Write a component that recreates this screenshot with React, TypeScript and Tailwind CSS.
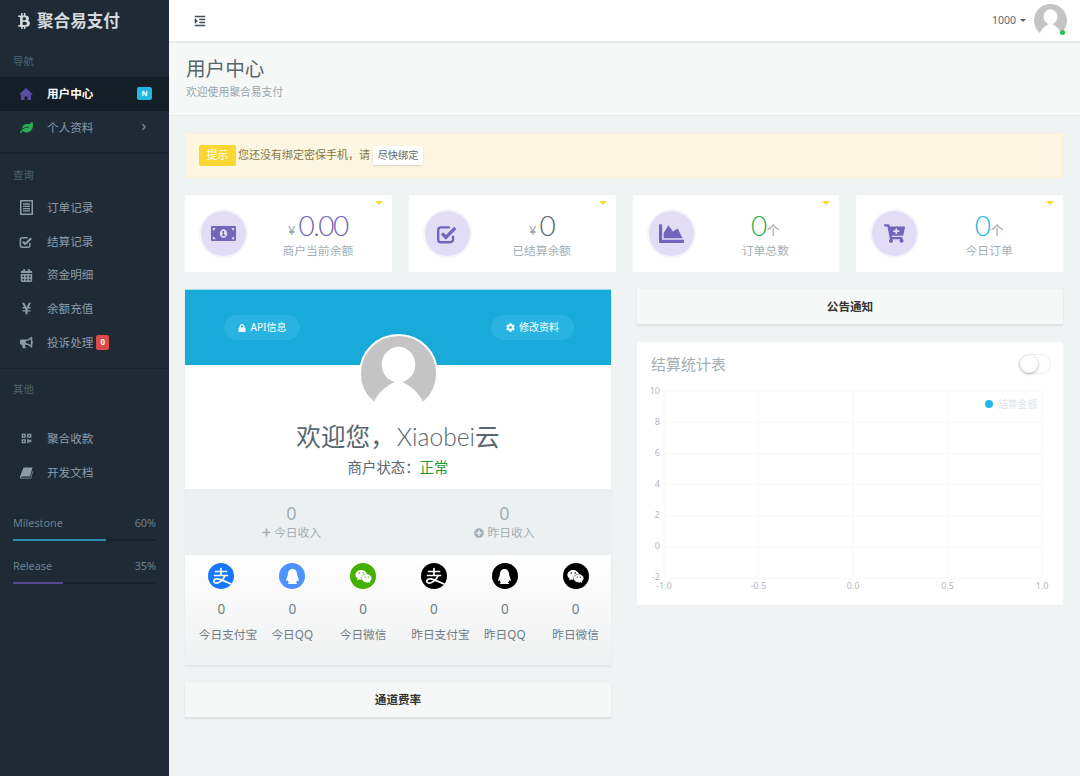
import {
  FaBtc,
  FaLeaf,
  FaCalendarAlt,
  FaYenSign,
  FaBullhorn,
  FaQrcode,
  FaAngleRight,
  FaIndent,
  FaLock,
  FaCog,
  FaPlus,
  FaPlusCircle,
  FaMoneyBillAlt,
  FaChartArea,
  FaCartPlus,
  FaQq,
  FaWeixin,
} from 'react-icons/fa'
import type { ReactNode } from 'react'

const font = "font-['Noto_Sans','Noto_Sans_CJK_SC',sans-serif]"

function HomeIcon() {
  return (
    <svg width="14" height="14" viewBox="0 0 14 14" fill="currentColor">
      <path d="M7 1L14 7.500H12V13H8.500V9.500H5.500V13H2V7.500H0Z" />
    </svg>
  )
}

function ListIcon() {
  return (
    <svg width="13" height="15" viewBox="0 0 13 15" fill="none" stroke="currentColor">
      <rect x="0.750" y="0.750" width="11.500" height="13.500" strokeWidth="1.500" />
      <path d="M3 4h7M3 6.300h7M3 8.600h7M3 10.900h7" strokeWidth="1.300" />
    </svg>
  )
}

function CheckIcon({ size }: { size: number }) {
  return (
    <svg width={size} height={size} viewBox="0 0 20 20" fill="none" stroke="currentColor">
      <path d="M15.500 11.500v3.500a2.500 2.500 0 0 1-2.500 2.500H4.500A2.500 2.500 0 0 1 2 15V6.500A2.500 2.500 0 0 1 4.500 4h8" strokeWidth="2.200" />
      <path d="M5.500 9.500l3.500 3.500 8.500-8.500" strokeWidth="3" />
    </svg>
  )
}

function BookIcon() {
  return (
    <svg width="13" height="12" viewBox="0 0 13 12" fill="currentColor">
      <path d="M3.500 0.500h9L10 9.500H1.500C1 9.500 0.900 10.800 1.800 10.800H10.500L12.500 4 13 4.500 11 11.500H1.500C0.300 11.500-0.300 10.300 0.200 9Z" />
    </svg>
  )
}

function AlipayMark() {
  return (
    <svg width="26" height="26" viewBox="0 0 26 26" fill="none" stroke="#ffffff" strokeWidth="1.700" strokeLinecap="round">
      <path d="M7.500 8.500H18.500M13 5.500V12M6.500 12.500H19.500" />
      <path d="M17 12.500C15.500 17 11 20.500 7.500 20C4.500 19.500 5.500 15.500 9.500 15.800C13 16 18 19 25 22" />
    </svg>
  )
}

function SideItem({ icon, label, badge, active }: { icon: ReactNode; label: string; badge?: ReactNode; active?: boolean }) {
  return (
    <div className={`flex h-[33.6px] items-center pl-[19px] pr-[17px] ${active ? 'bg-[#131e26] font-bold text-white' : 'text-[#8b9ba8]'}`}>
      <span className={`flex w-[14px] justify-center text-[13px] ${active ? 'text-[#5a4da8]' : 'text-[#8b9ba8]'}`}>{icon}</span>
      <span className="ml-[14px] text-[11.600px]">{label}</span>
      {badge}
    </div>
  )
}

function SideLabel({ children }: { children: ReactNode }) {
  return <div className="pl-[13px] text-[10.400px] text-[#4f6474]">{children}</div>
}

function Progress({ label, text, value, color }: { label: string; text: string; value: number; color: string }) {
  return (
    <div className="px-[13px]">
      <div className="flex h-[17px] items-center justify-between text-[10.800px] text-[#6c8090]">
        <span>{label}</span>
        <span>{text}</span>
      </div>
      <div className="mt-[8px] h-[2px] bg-[#15202a]">
        <div className={`h-full ${color}`} style={{ width: `${value}%` }} />
      </div>
    </div>
  )
}

function Sidebar() {
  return (
    <aside className="flex h-full w-[169px] shrink-0 flex-col bg-[#1e2b37]">
      <div className="flex h-[42px] items-center pl-[16px] text-[#d5dadf]">
        <FaBtc className="text-[16px]" />
        <span className="ml-[5px] text-[16.600px] font-bold">聚合易支付</span>
      </div>
      <div className="flex h-[35px] items-center pt-[5px]">
        <SideLabel>导航</SideLabel>
      </div>
      <SideItem
        active
        icon={<HomeIcon />}
        label="用户中心"
        badge={<span className="ml-auto flex h-[13px] w-[15px] items-center justify-center rounded-[2px] bg-[#23b7e5] text-[7.500px] font-bold text-white">N</span>}
      />
      <SideItem
        icon={<FaLeaf className="text-[#2dae52]" />}
        label="个人资料"
        badge={<FaAngleRight className="ml-auto mr-[3px] text-[10px] text-[#6c8090]" />}
      />
      <div className="mt-[8px] h-[2px] bg-[#17222c]" />
      <div className="flex h-[36px] items-center pt-[8px]">
        <SideLabel>查询</SideLabel>
      </div>
      <div className="mt-[1px]" />
      <SideItem icon={<ListIcon />} label="订单记录" />
      <SideItem icon={<CheckIcon size={14} />} label="结算记录" />
      <SideItem icon={<FaCalendarAlt />} label="资金明细" />
      <SideItem icon={<FaYenSign />} label="余额充值" />
      <SideItem
        icon={<FaBullhorn />}
        label="投诉处理"
        badge={<span className="ml-[3px] flex h-[15px] w-[13px] items-center justify-center rounded-[2px] bg-[#dc4a4a] text-[8px] font-bold text-white">0</span>}
      />
      <div className="mt-[9px] h-[1px] bg-[#17222c]" />
      <div className="flex h-[41px] items-center">
        <SideLabel>其他</SideLabel>
      </div>
      <div className="mt-[12px]" />
      <SideItem icon={<FaQrcode className="text-[11px]" />} label="聚合收款" />
      <SideItem icon={<BookIcon />} label="开发文档" />
      <div className="mt-[25px]" />
      <Progress label="Milestone" text="60%" value={65} color="bg-[#2a8fb0]" />
      <div className="mt-[16px]" />
      <Progress label="Release" text="35%" value={35} color="bg-[#54488f]" />
    </aside>
  )
}

function Avatar({ size, border }: { size: number; border?: boolean }) {
  return (
    <svg width={size} height={size} viewBox="0 0 80 80" className="block">
      <defs>
        <linearGradient id={`fade${size}`} x1="0" y1="0" x2="0" y2="1">
          <stop offset="0.8" stopColor="#c4c4c4" />
          <stop offset="1" stopColor="#ffffff" />
        </linearGradient>
      </defs>
      <circle cx="40" cy="40" r={border ? 39 : 40} fill={`url(#fade${size})`} stroke={border ? '#ffffff' : 'none'} strokeWidth="2" />
      <ellipse cx="40" cy="31" rx="17" ry="18" fill="#ffffff" />
      <path d="M40 46 C30 52 17 58 14 74 Q40 92 66 74 C63 58 50 52 40 46 Z" fill="#ffffff" />
    </svg>
  )
}

function StatCard({ icon, value, unit, prefix, valueColor, label }: { icon: ReactNode; value: string; unit?: string; prefix?: string; valueColor: string; label: string }) {
  return (
    <div className="relative flex h-[77px] items-center bg-white pl-[16px] pr-[2px]">
      <span className="absolute right-[9px] top-[6px] h-0 w-0 border-x-[4px] border-t-[4px] border-x-transparent border-t-[#fad733]" />
      <div className="flex h-[45px] w-[45px] shrink-0 items-center justify-center rounded-full bg-[#e2dcf6] text-[#7266ba] shadow-[0_0_0_2px_#f6f4fd]">
        {icon}
      </div>
      <div className="flex-1 text-center">
        <div className="flex h-[32px] items-end justify-center leading-none">
          {prefix && <span className="mb-[2px] mr-[3px] text-[13px] text-[#98a6ad]">{prefix}</span>}
          <span className={`font-['Lato',sans-serif] text-[28px] font-light tracking-[-1.500px] ${valueColor}`}>{value}</span>
          {unit && <span className="mb-[2px] ml-[1px] text-[13px] text-[#98a6ad]">{unit}</span>}
        </div>
        <div className="mt-[3px] text-[11.800px] text-[#a3afb5]">{label}</div>
      </div>
    </div>
  )
}

function PayIcon({ bg, children }: { bg: string; children: ReactNode }) {
  return <span className={`flex h-[26px] w-[26px] items-center justify-center overflow-hidden rounded-full text-white ${bg}`}>{children}</span>
}

function PayColumn({ icon, label, shift }: { icon: ReactNode; label: string; shift?: boolean }) {
  return (
    <div className="flex flex-col items-center">
      {icon}
      <div className="mt-[11px] text-[13.500px] leading-[18px] text-[#6f7c84]">0</div>
      <div className={`mt-[7px] whitespace-nowrap text-[11.700px] leading-[18px] text-[#6f7c84] ${shift ? 'ml-[13px]' : ''}`}>{label}</div>
    </div>
  )
}

function Bar({ children }: { children: ReactNode }) {
  return (
    <div className="flex h-[36px] items-center justify-center border-b border-[#dee5e7] bg-[#f6f8f8] text-[11.600px] font-bold text-[#333] shadow-[0_1px_2px_rgba(0,0,0,0.08)]">
      {children}
    </div>
  )
}

function Chart() {
  const ys = [10, 8, 6, 4, 2, 0, -2]
  const xs = ['-1.0', '-0.5', '0.0', '0.5', '1.0']
  return (
    <svg width="426" height="220" viewBox="0 0 426 220" className="block overflow-visible">
      {ys.map((y, i) => (
        <g key={y}>
          <line x1="27" x2="405" y1={4 + i * 31.2} y2={4 + i * 31.2} stroke="#f7f8f9" />
          <text x="23" y={7 + i * 31} textAnchor="end" fontSize="9" fill="#b4b8bb">{y}</text>
        </g>
      ))}
      {xs.map((x, i) => (
        <g key={x}>
          <line x1={27 + i * 94.5} x2={27 + i * 94.5} y1="4" y2="191" stroke="#f7f8f9" />
          <text x={27 + i * 94.5} y="202" textAnchor="middle" fontSize="9" fill="#b4b8bb">{x}</text>
        </g>
      ))}
      <circle cx="352" cy="17" r="4" fill="#23b7e5" />
      <text x="361" y="21" fontSize="9.800" fill="#e0e5ea">结算金额</text>
    </svg>
  )
}

export default function App() {
  return (
    <div className={`flex h-[776px] w-[1080px] overflow-hidden bg-[#f0f3f4] ${font}`}>
      <Sidebar />
      <main className="flex min-w-0 flex-1 flex-col">
        <header className="flex h-[43px] items-center justify-between border-b-2 border-[#e8ebec] bg-white pl-[25px] pr-[13px]">
          <FaIndent className="text-[12px] text-[#3e4d56]" />
          <div className="flex items-center">
            <span className="text-[10.500px] text-[#58666e]">1000</span>
            <span className="ml-[4px] h-0 w-0 border-x-[3px] border-t-[3px] border-x-transparent border-t-[#58666e]" />
            <div className="relative ml-[8px]">
              <Avatar size={33} />
              <span className="absolute bottom-[2px] right-[2px] h-[5px] w-[5px] rounded-full bg-[#27c24c]" />
            </div>
          </div>
        </header>

        <section className="h-[73px] border-b border-[#e6ebec] bg-[#f6f8f8] pl-[17px] pt-[11px]">
          <h1 className="text-[19.600px] font-normal leading-[30px] text-[#58666e]">用户中心</h1>
          <p className="text-[10.800px] leading-[15px] text-[#98a6ad]">欢迎使用聚合易支付</p>
        </section>

        <div className="pl-[16px] pr-[17px] pt-[17px]">
          <div className="flex h-[45px] items-center rounded-[2px] border border-[#faf1d3] bg-[#fdf7e1] pl-[13px]">
            <span className="flex h-[21px] w-[37px] items-center justify-center rounded-[2px] bg-[#fad733] text-[10.800px] text-white">提示</span>
            <span className="ml-[2px] text-[11px] text-[#8a7440]">您还没有绑定密保手机，请</span>
            <button className="ml-[3px] flex h-[19px] w-[50px] items-center justify-center rounded-[2px] bg-white text-[10.200px] text-[#58666e] shadow-[0_1px_2px_rgba(0,0,0,0.15)]">尽快绑定</button>
          </div>

          <div className="mt-[17px] grid grid-cols-4 gap-x-[17px]">
            <StatCard icon={<FaMoneyBillAlt className="text-[25px]" />} prefix="¥" value="0.00" valueColor="text-[#7266ba]" label="商户当前余额" />
            <StatCard icon={<CheckIcon size={22} />} prefix="¥" value="0" valueColor="text-[#58666e]" label="已结算余额" />
            <StatCard icon={<FaChartArea className="text-[25px]" />} value="0" unit="个" valueColor="text-[#27b04c]" label="订单总数" />
            <StatCard icon={<FaCartPlus className="text-[21px]" />} value="0" unit="个" valueColor="text-[#23b7e5]" label="今日订单" />
          </div>

          <div className="mt-[17px] grid grid-cols-2 gap-x-[26px]">
            <div>
              <div className="border-b border-[#dfe4e6] shadow-[0_1px_2px_rgba(0,0,0,0.06)]">
                <div className="flex h-[76px] items-start justify-between border-t border-[#9fdcf0] bg-[#18aad9] pl-[39px] pr-[37px] pt-[25px]">
                  <button className="flex h-[25px] w-[76px] items-center justify-center gap-[5px] rounded-full bg-[#29b3e0] text-[10px] text-white">
                    <FaLock className="text-[8px]" />
                    API信息
                  </button>
                  <button className="flex h-[25px] w-[83px] items-center justify-center gap-[4px] rounded-full bg-[#29b3e0] text-[10px] text-white">
                    <FaCog className="text-[9px]" />
                    修改资料
                  </button>
                </div>
                <div className="flow-root h-[124px] bg-white text-center">
                  <div className="relative z-10 -mt-[31px] flex justify-center">
                    <Avatar size={79} border />
                  </div>
                  <div className="mt-[6px] text-[24.600px] leading-[36px] text-[#58666e]">
                    欢迎您，<span className="ml-[2px] font-['Lato',sans-serif] font-light">Xiaobei</span>云
                  </div>
                  <div className="mt-[2px] text-[14.400px] leading-[22px] text-[#58666e]">
                    商户状态：<span className="text-[#229a2a]">正常</span>
                  </div>
                </div>
                <div className="grid h-[66px] grid-cols-2 bg-[#edf0f1] pt-[14px] text-center text-[#a3afb5]">
                  <div>
                    <div className="text-[18px] leading-[21px]">0</div>
                    <div className="flex items-center justify-center gap-[3px] text-[11.800px] leading-[17px]">
                      <FaPlus className="text-[9px]" />
                      今日收入
                    </div>
                  </div>
                  <div>
                    <div className="text-[18px] leading-[21px]">0</div>
                    <div className="flex items-center justify-center gap-[3px] text-[11.800px] leading-[17px]">
                      <FaPlusCircle className="text-[10px]" />
                      昨日收入
                    </div>
                  </div>
                </div>
                <div className="grid h-[110px] grid-cols-6 bg-gradient-to-b from-white to-[#eff0f1] pl-[1px] pt-[8px]">
                  <PayColumn shift icon={<PayIcon bg="bg-[#1678ff]"><AlipayMark /></PayIcon>} label="今日支付宝" />
                  <PayColumn icon={<PayIcon bg="bg-[#4b93ff]"><FaQq className="text-[15px]" /></PayIcon>} label="今日QQ" />
                  <PayColumn icon={<PayIcon bg="bg-[#44b000]"><FaWeixin className="text-[17px]" /></PayIcon>} label="今日微信" />
                  <PayColumn shift icon={<PayIcon bg="bg-black"><AlipayMark /></PayIcon>} label="昨日支付宝" />
                  <PayColumn icon={<PayIcon bg="bg-black"><FaQq className="text-[15px]" /></PayIcon>} label="昨日QQ" />
                  <PayColumn icon={<PayIcon bg="bg-black"><FaWeixin className="text-[17px]" /></PayIcon>} label="昨日微信" />
                </div>
              </div>
              <div className="mt-[16px]">
                <Bar>通道费率</Bar>
              </div>
            </div>

            <div>
              <Bar>公告通知</Bar>
              <div className="mt-[17px] h-[263px] bg-white pt-[11px]">
                <div className="flex h-[22px] items-center justify-between pl-[14px] pr-[12px]">
                  <span className="text-[15px] text-[#a3afb5]">结算统计表</span>
                  <span className="flex h-[20px] w-[32px] items-center rounded-full border border-[#eef0f1] bg-white">
                    <span className="h-[18px] w-[18px] rounded-full bg-white shadow-[0_1px_3px_rgba(0,0,0,0.3)]" />
                  </span>
                </div>
                <div className="mt-[12px]">
                  <Chart />
                </div>
              </div>
            </div>
          </div>
        </div>
      </main>
    </div>
  )
}
